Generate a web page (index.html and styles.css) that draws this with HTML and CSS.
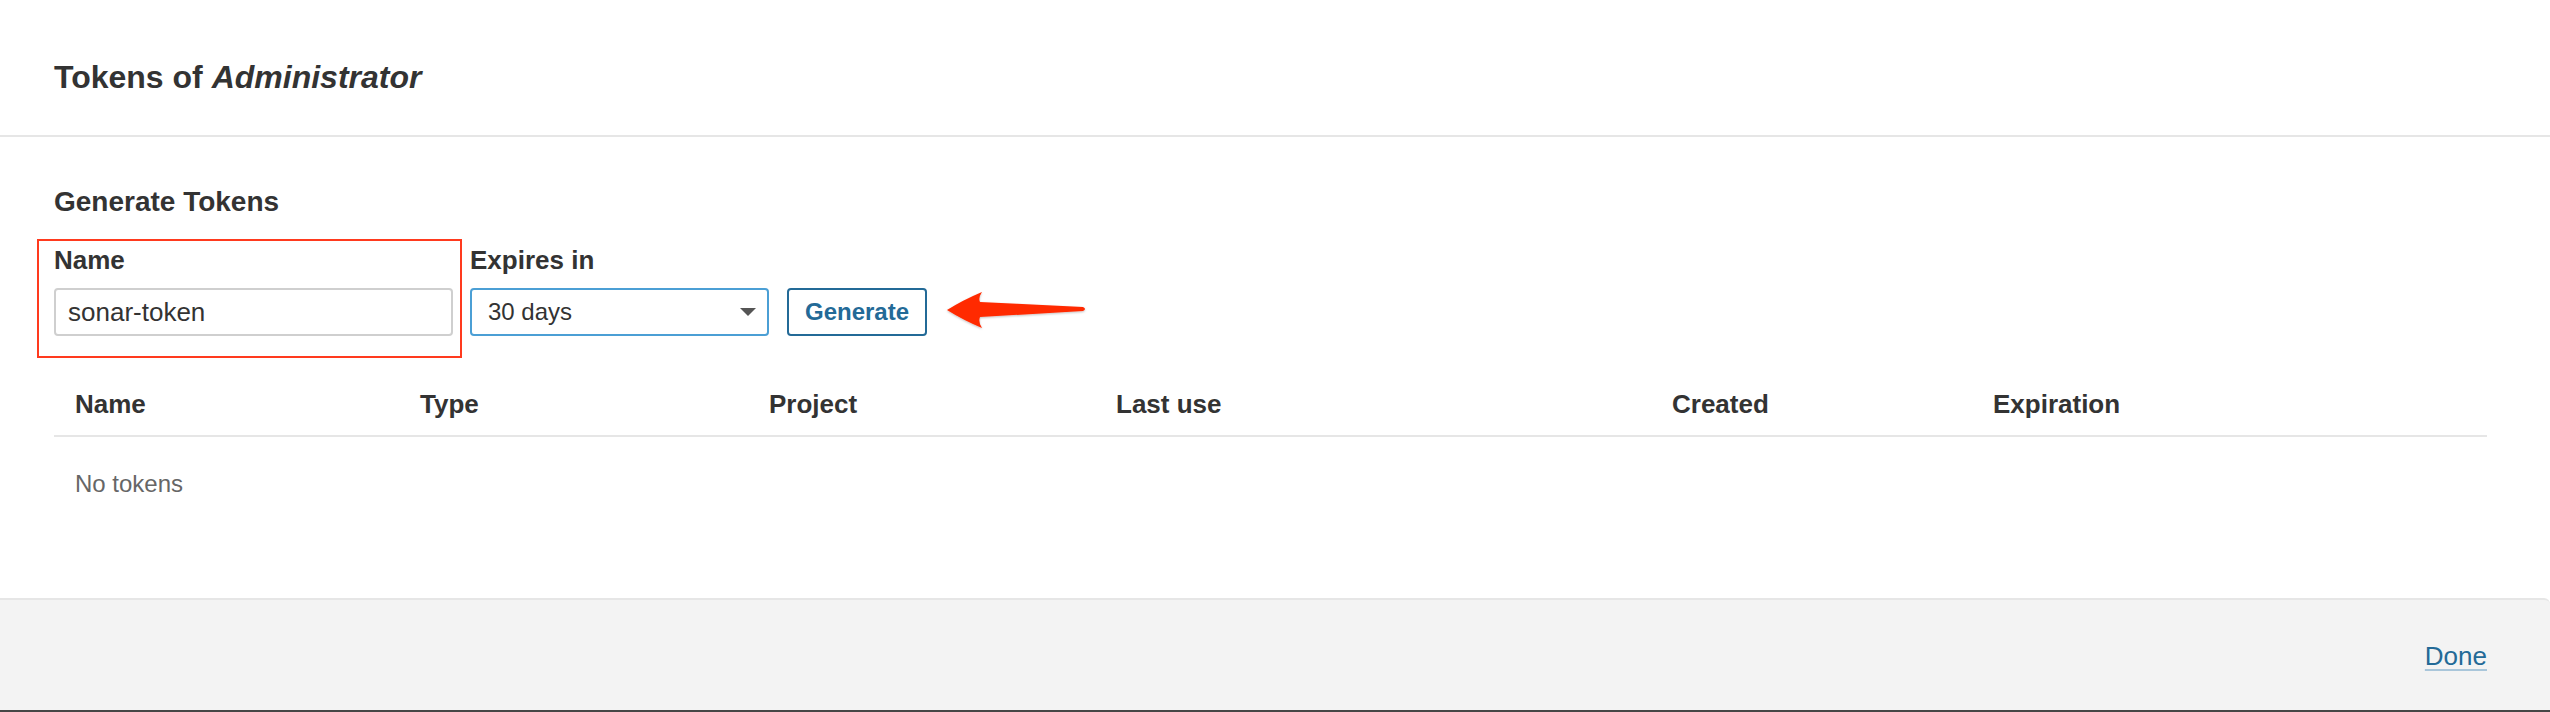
FILE: index.html
```html
<!DOCTYPE html>
<html lang="en">
<head>
<meta charset="utf-8">
<title>Tokens of Administrator</title>
<link rel="stylesheet" href="styles.css">
</head>
<body>
<div class="modal">
  <header class="modal-head">
    <h2 class="modal-title">Tokens of <em>Administrator</em></h2>
  </header>
  <main class="modal-body">
    <h3 class="section-title">Generate Tokens</h3>
    <form class="gen-form">
      <div class="field field-name">
        <label class="field-label" for="token-name">Name</label>
        <input class="text-input" id="token-name" type="text" value="sonar-token">
        <span class="highlight-box"></span>
      </div>
      <div class="field field-expiry">
        <span class="field-label">Expires in</span>
        <div class="select-box">
          <span class="select-value">30 days</span>
          <svg class="select-caret" width="16" height="8" viewBox="0 0 16 8"><path d="M0 0 H16 L8 8 Z" fill="#555"/></svg>
        </div>
      </div>
      <button type="button" class="btn-generate">Generate</button>
      <svg class="annot-arrow" width="144" height="42" viewBox="0 0 144 42">
        <defs>
          <filter id="sh" x="-10%" y="-30%" width="120%" height="160%">
            <feDropShadow dx="0" dy="1" stdDeviation="1" flood-color="#000" flood-opacity="0.25"/>
          </filter>
        </defs>
        <path filter="url(#sh)" d="M2 21 Q18 11 37 3 Q33 9 35 13 L138 18 Q142 20 138 22 L35 28 Q33 33 37 39 Q18 31 2 21 Z" fill="#ff2a00"/>
      </svg>
    </form>

    <div class="tokens-table">
      <div class="row head-row">
        <div class="cell">Name</div>
        <div class="cell">Type</div>
        <div class="cell">Project</div>
        <div class="cell">Last use</div>
        <div class="cell">Created</div>
        <div class="cell">Expiration</div>
      </div>
      <div class="empty-row">No tokens</div>
    </div>
  </main>
  <footer class="modal-foot">
    <a class="link-done" href="#">Done</a>
  </footer>
</div>
</body>
</html>
```

FILE: styles.css
```css
html, body {
  margin: 0;
  padding: 0;
  background: #ffffff;
}

body {
  font-family: "Liberation Sans", Arial, Helvetica, sans-serif;
  color: #333333;
  width: 2550px;
  height: 712px;
  overflow: hidden;
}

.modal {
  height: 712px;
  box-sizing: border-box;
  display: flex;
  flex-direction: column;
  background: #ffffff;
  border-bottom: 2px solid #464646;
}

.modal-head {
  height: 137px;
  box-sizing: border-box;
  padding: 57px 0 0 54px;
  border-bottom: 2px solid #e6e6e6;
}

.modal-title {
  margin: 0;
  font-size: 32px;
  line-height: 40px;
  font-weight: bold;
  color: #333333;
}

.modal-title em {
  font-style: italic;
}

.modal-body {
  flex: 1;
  padding: 48px 63px 0 54px;
}

.section-title {
  margin: 0;
  font-size: 28px;
  line-height: 34px;
  font-weight: bold;
  color: #333333;
}

.gen-form {
  display: flex;
  align-items: flex-end;
  margin-top: 25px;
}

.field {
  display: flex;
  flex-direction: column;
  position: relative;
}

.field-name {
  width: 399px;
  margin-right: 17px;
}

.field-expiry {
  width: 299px;
  margin-right: 18px;
}

.field-label {
  font-size: 26px;
  line-height: 32px;
  font-weight: bold;
  color: #333333;
  margin-bottom: 12px;
}

.text-input {
  box-sizing: border-box;
  width: 399px;
  height: 48px;
  margin: 0;
  padding: 0 12px;
  border: 2px solid #cfcfcf;
  border-radius: 4px;
  font-family: inherit;
  font-size: 26px;
  color: #333333;
  background: #ffffff;
  outline: none;
}

.highlight-box {
  position: absolute;
  left: -17px;
  top: -5px;
  right: -9px;
  bottom: -22px;
  border: 2px solid #ff3a1e;
  pointer-events: none;
}

.select-box {
  box-sizing: border-box;
  height: 48px;
  display: flex;
  align-items: center;
  justify-content: space-between;
  padding: 0 11px 0 16px;
  border: 2px solid #4b9fd5;
  border-radius: 4px;
  background: #ffffff;
}

.select-value {
  font-size: 24px;
  color: #333333;
}

.select-caret {
  display: block;
}

.btn-generate {
  box-sizing: border-box;
  height: 48px;
  width: 140px;
  margin: 0;
  padding: 0;
  border: 2px solid #236a97;
  border-radius: 4px;
  background: #ffffff;
  color: #236a97;
  font-family: inherit;
  font-size: 24px;
  font-weight: bold;
}

.annot-arrow {
  display: block;
  margin: 0 0 5px 18px;
}

.tokens-table {
  margin-top: 52px;
}

.row {
  display: grid;
  grid-template-columns: 345px 349px 347px 556px 321px 1fr;
}

.head-row {
  border-bottom: 2px solid #e6e6e6;
  padding-bottom: 15px;
}

.cell {
  padding-left: 21px;
  font-size: 26px;
  line-height: 32px;
  font-weight: bold;
  color: #333333;
}

.empty-row {
  padding: 32px 0 0 21px;
  font-size: 24px;
  line-height: 30px;
  color: #666666;
}

.modal-foot {
  height: 112px;
  box-sizing: border-box;
  display: flex;
  justify-content: flex-end;
  align-items: flex-start;
  padding: 40px 63px 0 0;
  background: #f3f3f3;
  border-top: 2px solid #e6e6e6;
  border-top-right-radius: 6px;
}

.link-done {
  font-size: 26px;
  line-height: 32px;
  color: #236a97;
  text-decoration-line: underline;
  text-decoration-color: #a9c6da;
  text-decoration-thickness: 2px;
  text-underline-offset: 4px;
}
```
